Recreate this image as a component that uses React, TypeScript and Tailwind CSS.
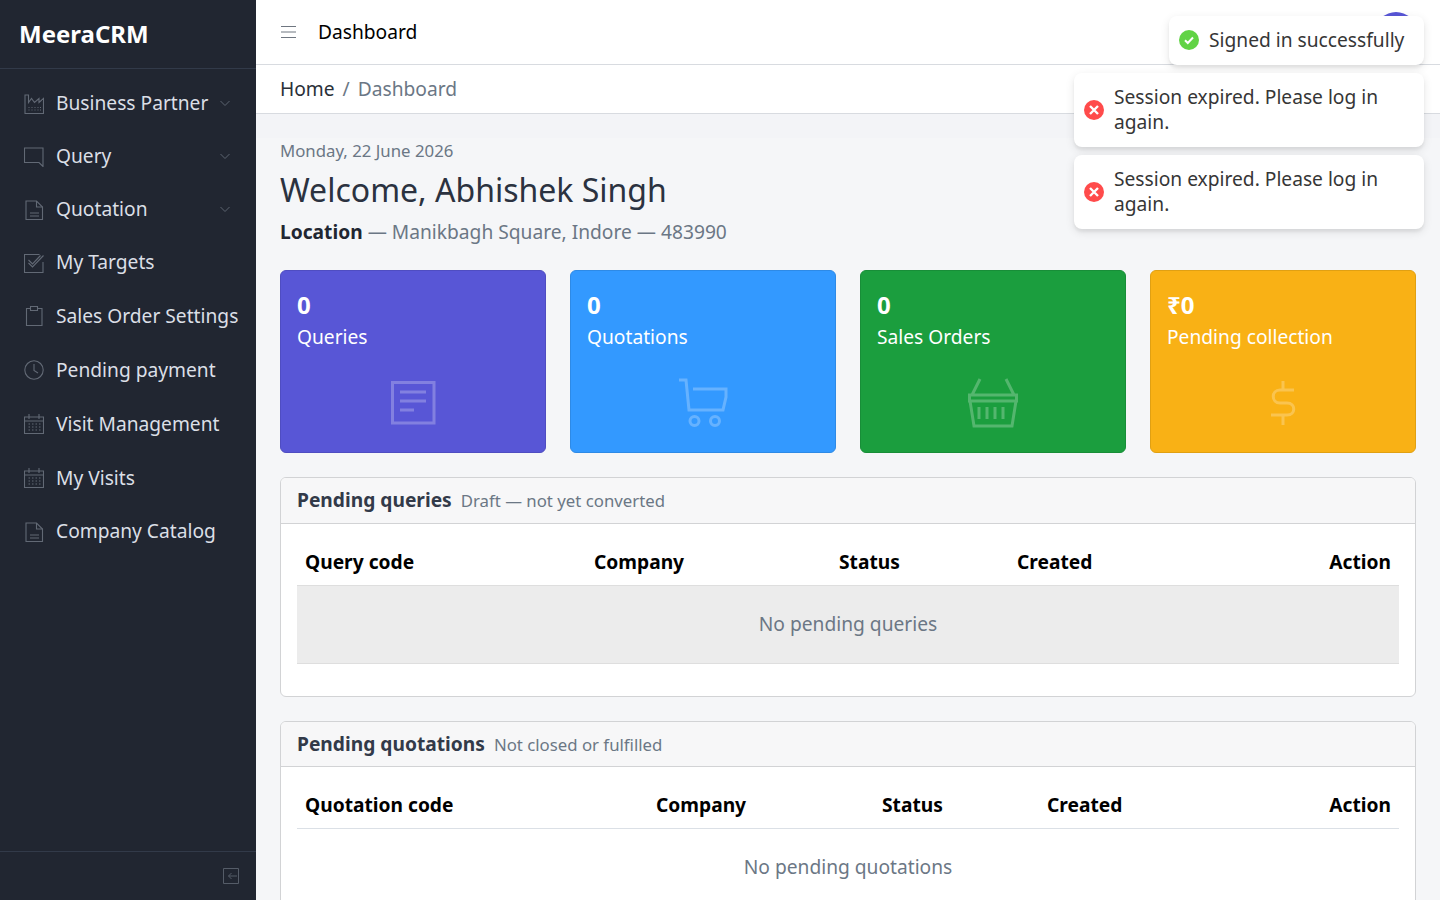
import React from "react";

type IP = { className?: string };
const S = ({ className, children }: IP & { children: React.ReactNode }) => (
  <svg viewBox="2 2 20 20" fill="none" stroke="currentColor" strokeWidth={1.1} className={className}>{children}</svg>
);
const Industry = (p: IP) => (
  <S {...p}><path d="M3 3v18.500h18.500V6.500l-4.500 4V6.500l-4.500 4-3-4-3 4V3z" /><path d="M6.500 15.500h1M9.500 15.500h1M12.500 15.500h1M15.500 15.500h1M18 15.500h1M6.500 18h1M9.500 18h1M12.500 18h1M15.500 18h1M18 18h1" /></S>
);
const Comment = (p: IP) => (
  <S {...p}><path d="M2.500 3h18.500v18.500l-4-4H2.500z" /></S>
);
const Doc = (p: IP) => (
  <S {...p}><path d="M4 3h10.500L20.500 9v12.500H4z" /><path d="M14.500 3v6h6M8 15h9M8 18h9" /></S>
);
const Task = (p: IP) => (
  <S {...p}><path d="M21 11v10.500H2.500v-18h15" /><path d="M6.500 12l4 4L21.500 4.500M6.500 9l4 4 8-8.500" /></S>
);
const Clip = (p: IP) => (
  <S {...p}><path d="M8.500 4.500H4.500v17h15.500v-17h-4" /><path d="M8.500 2.500h7v4h-7z" /></S>
);
const Clock = (p: IP) => (
  <S {...p}><circle cx="12" cy="12" r="9.200" /><path d="M12 6v6.500l4 2.500" /></S>
);
const Cal = (p: IP) => (
  <S {...p}><path d="M2.500 5h19v16.500h-19zM2.500 9h19M7 2v5M17 2v5" /><path d="M6.500 12h1.500M10 12h1.500M13.500 12h1.500M17 12h1.500M6.500 15h1.500M10 15h1.500M13.500 15h1.500M17 15h1.500M6.500 18h1.500M10 18h1.500M13.500 18h1.500M17 18h1.500" /></S>
);
const Chev = () => (
  <svg viewBox="0 0 12 12" fill="none" stroke="currentColor" strokeWidth="1" className="w-3 h-3 -mt-[1px] text-[#5c6470]"><path d="M1.500 4l4.500 4.500L10.500 4" /></svg>
);

const nav: [React.FC<IP>, string, boolean, string][] = [
  [Industry, "Business Partner", true, "h-[53px]"],
  [Comment, "Query", true, "h-[53px]"],
  [Doc, "Quotation", true, "h-[53px]"],
  [Task, "My Targets", false, "h-[53px]"],
  [Clip, "Sales Order Settings", false, "h-[54px]"],
  [Clock, "Pending payment", false, "h-[54px]"],
  [Cal, "Visit Management", false, "h-[54px]"],
  [Cal, "My Visits", false, "h-[54px]"],
  [Doc, "Company Catalog", false, "h-[53px]"],
];

const Toast = ({ ok, text, className }: { ok?: boolean; text: React.ReactNode; className: string }) => (
  <div className={`flex items-center gap-[10px] bg-white rounded-lg shadow-[0_3px_10px_rgba(0,0,0,0.1),0_3px_3px_rgba(0,0,0,0.05)] text-[#363636] text-[19.2px] leading-[25px] ${className}`}>
    <svg viewBox="0 0 20 20" className={`w-5 h-5 shrink-0 ${ok ? "-mt-[1px]" : ""}`}>
      <circle cx="10" cy="10" r="10" fill={ok ? "#61d345" : "#ff4b4b"} />
      {ok ? (
        <path d="M6 10.200l2.800 2.800L14 7.500" fill="none" stroke="#fff" strokeWidth="2" />
      ) : (
        <path d="M6 6l8 8M14 6l-8 8" fill="none" stroke="#fff" strokeWidth="2.400" />
      )}
    </svg>
    <div className="-mt-[3px]">{text}</div>
  </div>
);

const Stat = ({ value, label, bg, icon }: { value: string; label: string; bg: string; icon: React.ReactNode }) => (
  <div className={`h-[183px] rounded-md border text-white px-4 pt-[19px] flex flex-col ${bg}`}>
    <div className="text-[24px] leading-[30px] font-bold">{value}</div>
    <div className="text-[19.2px] leading-[29px] mt-[2px]">{label}</div>
    <div className="flex justify-center h-[50px] mt-[27px] text-white/25">{icon}</div>
  </div>
);

const Panel = ({ title, sub, cols, widths, empty, hl, className, headH, headBorder }: { title: string; sub: string; cols: string[]; widths: string; empty: string; hl?: boolean; className: string; headH: string; headBorder: string }) => (
  <section className={`border border-[#d2d3d5] rounded-md bg-white overflow-hidden shrink-0 ${className}`}>
    <div className={`${headH} bg-[#f7f7f8] border-b border-[#d2d3d5] px-4 flex items-center gap-[9px]`}>
      <span className="text-[19.2px] font-bold text-[#323a49]">{title}</span>
      <span className="text-[16.8px] text-[#6b7785]">{sub}</span>
    </div>
    <div className="px-4 pt-4">
      <div className={`grid ${widths} h-[46px] items-center border-b ${headBorder} text-[19.2px] font-bold text-black px-2`}>
        {cols.map((c, i) => (
          <div key={c} className={i === cols.length - 1 ? "text-right" : ""}>{c}</div>
        ))}
      </div>
      <div className={`flex items-center justify-center text-[19.2px] text-[#6b7785] ${hl ? "h-[78px] bg-[#ececec] border-b border-[#dedede]" : "h-[76px]"}`}>{empty}</div>
    </div>
  </section>
);

export default function App() {
  return (
    <div className="relative h-[900px] w-[1440px] overflow-hidden flex bg-[#f3f4f7] text-[19.2px] text-[#212631] font-['Noto_Sans',sans-serif]">
      <aside className="w-[256px] shrink-0 h-full bg-[#212631] flex flex-col">
        <div className="h-[69px] border-b border-[#323a49] pl-[19px] pt-[16px] text-[24px] leading-[36px] font-bold text-white">MeeraCRM</div>
        <nav className="pt-[8px] flex-1">
          {nav.map(([I, t, c, h]) => (
            <div key={t} className={`${h} flex items-center pl-[24px] pr-[25px] text-[#dbdfe6]`}>
              <I className="w-5 h-5 mr-[12px] shrink-0 text-[#626975]" />
              <span className="flex-1 whitespace-nowrap">{t}</span>
              {c && <Chev />}
            </div>
          ))}
        </nav>
        <div className="h-[49px] border-t border-[#323a49] flex items-center justify-end pr-[17px]">
          <svg viewBox="0 0 16 16" fill="none" stroke="currentColor" className="w-4 h-4 text-[#555c68]">
            <path d="M5 .500h10.500v15H.500V.500zM14 8H5.500M8.500 5l-3 3 3 3" />
          </svg>
        </div>
      </aside>
      <main className="flex-1 min-w-0 flex flex-col">
        <header className="h-[65px] bg-white border-b border-[#d8dbe0] flex items-center pl-[25px] relative shrink-0">
          <svg viewBox="0 0 15 14" stroke="currentColor" className="w-[15px] h-[14px] text-[#6f7680] -mt-[1px]"><path d="M0 1.500h15M0 7h15M0 12.500h15" /></svg>
          <span className="ml-[22px] text-black">Dashboard</span>
          <div className="absolute right-[24px] top-[12px] w-[40px] h-[40px] rounded-full bg-[#5856d6]" />
        </header>
        <div className="h-[49px] bg-white border-b border-[#d8dbe0] flex items-center px-[24px] shrink-0">
          <span className="text-[#2a3038]">Home</span>
          <span className="mx-[8px] text-[#6b7785]">/</span>
          <span className="text-[#6b7785]">Dashboard</span>
        </div>
        <div className="mt-[24px] bg-[#f5f6f8] px-[24px] flex-1 min-h-0">
          <div className="text-[16.8px] leading-[26px] text-[#6b7785]">Monday, 22 June 2026</div>
          <h1 className="text-[32px] leading-[42px] mt-[5px] text-[#2b3240]">Welcome, Abhishek Singh</h1>
          <div className="mt-[6px] leading-[30px] text-[#6b7785]"><b className="font-bold text-[#212631]">Location</b> — Manikbagh Square, Indore — 483990</div>
          <div className="grid grid-cols-4 gap-[24px] mt-[23px]">
            <Stat value="0" label="Queries" bg="bg-[#5856d6] border-[#4f4dc1]" icon={
              <svg viewBox="0 0 46 46" fill="none" stroke="currentColor" strokeWidth="3" className="w-[46px] h-[46px] mt-[2px] ml-[1px]"><path d="M1.500 2.500h41.500v40.500H1.500zM9 12h26M9 21h26M9 30h14" /></svg>
            } />
            <Stat value="0" label="Quotations" bg="bg-[#3399ff] border-[#2e8ae6]" icon={
              <svg viewBox="0 0 50 50" fill="none" stroke="currentColor" strokeWidth="3" className="w-[50px] h-[50px] ml-[1px]"><path d="M0 2h7l3 30h34l3-13V11H14" /><circle cx="15.500" cy="43" r="4.500" /><circle cx="36" cy="43" r="4.500" /></svg>
            } />
            <Stat value="0" label="Sales Orders" bg="bg-[#1b9e3e] border-[#188e38]" icon={
              <svg viewBox="0 0 50 50" fill="none" stroke="currentColor" strokeWidth="3" className="w-[50px] h-[50px]"><path d="M12 1L4 17M38 1l8 16M1.500 17h47v6h-47zM2 23l4 25h38l4-25M11 29v12M19 29v12M27 29v12M35 29v12" /></svg>
            } />
            <Stat value="₹0" label="Pending collection" bg="bg-[#f9b115] border-[#e0a013]" icon={
              <svg viewBox="0 0 30 46" fill="none" stroke="currentColor" strokeWidth="3" className="w-[30px] h-[46px] mt-[2px]"><path d="M15 1v9M15 35v10M26 10H12c-9 0-9 13 0 13h7c9 0 9 12 0 12H3" /></svg>
            } />
          </div>
          <div className="flex flex-col gap-[24px] mt-[24px]">
            <Panel title="Pending queries" sub="Draft — not yet converted" cols={["Query code", "Company", "Status", "Created", "Action"]} widths="grid-cols-[289px_245px_178px_1fr_auto]" empty="No pending queries" hl className="h-[220px]" headH="h-[46px]" headBorder="border-[#dedede]" />
            <Panel title="Pending quotations" sub="Not closed or fulfilled" cols={["Quotation code", "Company", "Status", "Created", "Action"]} widths="grid-cols-[351px_226px_165px_1fr_auto]" empty="No pending quotations" className="h-[220px]" headH="h-[45px] pt-[1px]" headBorder="border-[#dbe0e6]" />
          </div>
        </div>
      </main>
      <div className="absolute top-[16px] right-[16px] w-[350px] flex flex-col items-end gap-[8px]">
        <Toast ok text="Signed in successfully" className="w-[255px] h-[49px] pl-[10px]" />
        <Toast text={<>Session expired. Please log in<br />again.</>} className="w-full h-[74px] pl-[10px]" />
        <Toast text={<>Session expired. Please log in<br />again.</>} className="w-full h-[74px] pl-[10px]" />
      </div>
    </div>
  );
}
